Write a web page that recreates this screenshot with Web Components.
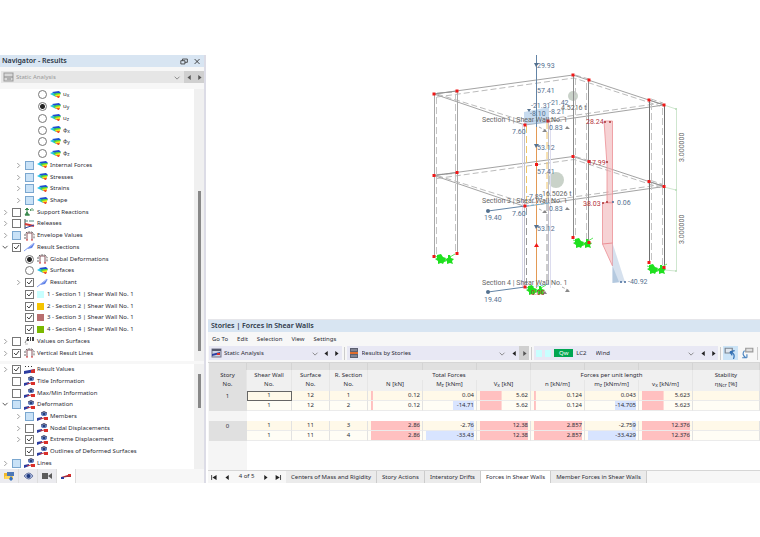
<!DOCTYPE html>
<html lang="en">
<head>
<meta charset="utf-8">
<title>Stories | Forces in Shear Walls</title>
<style>
  body {
    margin: 0;
    background: #fff;
    color: #2c2d36;
    font: 6px/9px "Noto Sans", "Open Sans", sans-serif;
  }
</style>
</head>
<body>
<results-app></results-app>

<script>
const ICONS = {
  surface: `<path d="M0 4 4 2 7 4 6 7z" fill="#25c4e8"/><path d="M2 2 9 1 11 3 5 4z" fill="#1d4fd0"/><path d="M3 4 7 3 11 3 10 5 5 6z" fill="#45d34a"/><path d="M5 5 10 4 10 6 6 7z" fill="#f5e11c"/><path d="M6 6 10 6 9 8 8 8z" fill="#f0522a"/>`,
  support: `<path d="M3 1v6M1 3l2-2 2 2M1 8h5M3 5 1 8h4z" stroke="#3c8a50" fill="#3c8a50"/><path d="M6 3h4M7 2 6 3l1 1M8 1v1" stroke="#5a9a6a" fill="none"/>`,
  release: `<path d="M1 0v10" stroke="#444" fill="none"/><path d="M1 2h3M5 2h5" stroke="#4f8b84" fill="none"/><path d="M1 5 10 7" stroke="#d33a35" stroke-width="2"/><path d="M1 9 10 6" stroke="#3347a5"/>`,
  frame: `<path d="M3 9V2h5v7" stroke="#8c5960" fill="none"/><path d="M1 8V3l2-2h5l2 2v5" stroke="#666" fill="none" stroke-dasharray="2 1"/><path d="M2 9h2M7 9h2" stroke="#d94040"/>`,
  section: `<path d="M0 9 11 1 8 6 3 7z" fill="#5f82e8"/><path d="M0 9 10 1" stroke="#8aa2f2"/>`,
  values: `<path d="M1 7 3 3" stroke="#888"/><path d="M3 1h2v1H4v1h1v2H3zM6 1h1v4H6zM8 1h2v4H8z" fill="#444"/><path d="M1 8h3" stroke="#bbb"/>`,
  result: `<path d="M0 9V6l11-2v3z" fill="#2c3da0"/><path d="M7 5l4-1v4H7z" fill="#d9302a"/><path d="M1 1l1 1M2 1 1 2M4 1l1 1M5 1 4 2M7 1l1 1M8 1 7 2" stroke="#333"/>`,
  display: `<path d="M0 10V7l5-1v2z" fill="#2c3da0"/><path d="M7 6h4v3H7z" fill="#d9302a"/><path d="M3 8 7 7" stroke="#b34"/><ellipse cx="7" cy="3" rx="3" ry="2" fill="#5b78ba"/><path d="M4 2q3-3 6 0" stroke="#446" fill="none"/><circle cx="7" cy="3" r="1" fill="#122a60"/>`,
  analysis: `<rect x="1" y="1" width="9" height="8" fill="#ccd3e4" stroke="#73758a"/><path d="M1 2h9" stroke="#55586e" stroke-width="2"/><path d="M1 8V6l8-2v2z" fill="#2c3da0"/><path d="M6 5h3v2H6z" fill="#d9302a"/>`,
  analysisGray: `<rect x="1" y="1" width="9" height="8" fill="#d8d8d8" stroke="#999"/><path d="M1 5h9M4 7h4" stroke="#888"/>`,
  stories: `<rect x="1" y="0" width="8" height="10" fill="#5c5f70"/><path d="M2 2h6M2 8h6" stroke="#a6a8b4"/><path d="M1 5h8" stroke="#e06c2c" stroke-width="2"/>`,
  folder: `<path d="M0 2h4l1 1h4v5H0z" fill="#f0b92c"/><path d="M3 1h7v4H3z" fill="#4c78b8"/><path d="M1 5h8L8 8H0z" fill="#ffd75a"/><path d="M5 8l2-3 2 3-2 2z" fill="#3470c0"/>`,
  eye: `<path d="M1 5q5-6 9 0-4 6-9 0z" fill="#a9b8dc" stroke="#6a78a4"/><circle cx="5.500" cy="5" r="2" fill="#1f397e"/>`,
  camera: `<rect x="0" y="2" width="6" height="6" fill="#5c5c5c"/><path d="M6 5 10 2v6z" fill="#5c5c5c"/>`,
  line: `<path d="M0 7V6l10-3v3H6z" fill="#a52c3c"/><path d="M0 6h3v2H0z" fill="#2c3da0"/><path d="M7 3h3v2H7z" fill="#d9302a"/>`,
  pickOn: `<path d="M1 1h6v4H1z" fill="#dfe6ee" stroke="#7a8591"/><path d="M5 4q5 1 3 6M5 4l4-1M5 4l2 3" stroke="#2f6fb5" fill="none"/>`,
  pickOff: `<path d="M4 1h6v3H4z" fill="#dfdfdf" stroke="#9a9a9a"/><path d="M3 3q-3 3 1 6M5 9H1M5 9V6" stroke="#4a84c0" fill="none"/>`,
  chevron: `<path d="M2 4l3 3 3-3" stroke="#777" fill="none"/>`,
  right: `<path d="M4 2l3 3-3 3" stroke="#888" fill="none"/>`,
  down: `<path d="M2 3l3 3 3-3" stroke="#333" fill="none"/>`,
  prev: `<path d="M7 2v6L3 5z" fill="currentColor"/>`,
  next: `<path d="M4 2v6l4-3z" fill="currentColor"/>`,
  first: `<path d="M2 2v6" stroke="currentColor"/><path d="M8 2v6L3 5z" fill="currentColor"/>`,
  last: `<path d="M8 2v6" stroke="currentColor"/><path d="M2 2v6l5-3z" fill="currentColor"/>`,
  restore: `<path d="M1 4h5v4H1zM3 4V2h6v4H6" stroke="#333" fill="none"/>`,
  close: `<path d="M2 2l6 6M8 2 2 8" stroke="#222"/>`
};

function icon(name) {
  return `<svg viewBox="0 0 11 10" aria-hidden="true">${ICONS[name] || ''}</svg>`;
}

class TreeItem extends HTMLElement {
  connectedCallback() {
    const level = Number(this.getAttribute('level') || 0);
    const open = this.getAttribute('open');
    const type = this.hasAttribute('radio') ? 'radio' : 'checkbox';
    const state = this.getAttribute('state') || '';
    const color = this.getAttribute('color');
    this.attachShadow({ mode: 'open' }).innerHTML = `
      <style>
        :host {
          display: flex;
          align-items: center;
          min-height: 0;
          padding-left: ${level * 13}px;
        }
        button, .blank {
          box-sizing: border-box;
          flex: none;
          width: 12px;
          height: 10px;
          padding: 0 0 0 1px;
          border: 0;
          background: none;
        }
        svg { display: block; width: 10px; height: 10px; }
        label svg { width: 11px; height: 10px; margin-right: -1px; }
        button svg { width: 9px; height: 9px; }
        input {
          appearance: none;
          flex: none;
          box-sizing: border-box;
          width: 9px;
          height: 9px;
          margin: 0;
          border: 1px solid #777;
          background: #fff;
        }
        input[type=radio] { border-radius: 50%; }
        input[type=radio]:checked {
          background: radial-gradient(circle, #222 0 2px, #fff 3px);
        }
        .check { display: grid; flex: none; margin-right: 3px; }
        .check > * { grid-area: 1 / 1; }
        .check svg { width: 9px; height: 9px; pointer-events: none; }
        .mixed { background: #c9e2f7; border-color: #7ba7cf; }
        label { display: flex; align-items: center; gap: 3px; white-space: nowrap; }
        i { width: 7px; height: 7px; background: ${color || 'none'}; }
      </style>
      ${open === null ? '<span class="blank"></span>'
        : `<button aria-label="Toggle branch">${icon(open === 'yes' ? 'down' : 'right')}</button>`}
      <span class="check">
        <input id="box" type="${type}" class="${state}" ${state === 'on' ? 'checked' : ''}>
        ${type === 'checkbox' && state === 'on'
          ? '<svg viewBox="0 0 9 9"><path d="M2 4l2 2 3-4" stroke="#444" fill="none"/></svg>' : ''}
      </span>
      <label for="box">${color ? '<i></i>' : icon(this.getAttribute('icon'))}<span><slot></slot></span></label>
    `;
  }
}

class StepButton extends HTMLElement {
  connectedCallback() {
    this.attachShadow({ mode: 'open' }).innerHTML = `
      <style>
        :host { display: flex; flex: none; width: 10px; color: #222; }
        :host([muted]) { background: #d0d0d0; color: #555; }
        button {
          display: flex;
          flex: 1;
          align-items: center;
          justify-content: center;
          padding: 0;
          border: 0;
          background: none;
          color: inherit;
        }
        svg { flex: none; width: 9px; height: 9px; }
      </style>
      <button aria-label="${this.getAttribute('label')}">${icon(this.getAttribute('icon'))}</button>
    `;
  }
}

// Drop-down with an optional icon or tags in front and two step buttons behind
class PickList extends HTMLElement {
  connectedCallback() {
    const name = this.getAttribute('icon');
    this.attachShadow({ mode: 'open' }).innerHTML = `
      <style>
        :host { display: flex; align-items: stretch; height: 14px; background: #e8e8f4; }
        :host([disabled]) { background: #e6e6e6; }
        .lead { display: flex; align-items: center; gap: 3px; padding-left: 2px; }
        .lead svg { width: 11px; height: 10px; }
        .pick { display: grid; flex: 1; align-items: center; min-width: 0; }
        .pick > * { grid-area: 1 / 1; }
        .pick svg { width: 9px; height: 9px; justify-self: end; pointer-events: none; margin-right: 2px; }
        select {
          appearance: none;
          width: 100%;
          margin: 0;
          padding: 0 12px 0 2px;
          border: 0;
          background: none;
          color: #2c2d36;
          font: inherit;
        }
        :host([disabled]) select { color: #999; opacity: 1; }
      </style>
      <span class="lead">${name ? icon(name) : ''}<slot></slot></span>
      <span class="pick">
        <select aria-label="${this.getAttribute('label')}" ${this.hasAttribute('disabled') ? 'disabled' : ''}>
          <option>${this.getAttribute('value')}</option>
        </select>
        ${icon('chevron')}
      </span>
      <step-button icon="prev" label="Previous" ${this.hasAttribute('disabled') ? 'muted' : ''}></step-button>
      <step-button icon="next" label="Next" ${this.hasAttribute('end') ? 'muted' : ''}></step-button>
    `;
  }
}

class ResultsNavigator extends HTMLElement {
  connectedCallback() {
    this.attachShadow({ mode: 'open' }).innerHTML = `
      <style>
        :host {
          display: flex;
          flex-direction: column;
          background: #f7f7f7;
          border-right: 2px solid #dcdce6;
        }
        header {
          display: flex;
          align-items: center;
          height: 12px;
          padding-left: 2px;
          background: #d8e5f2;
        }
        h1 { flex: 1; margin: 0; font: 600 7px/12px "Noto Sans", sans-serif; color: #2a3444; }
        header button { width: 13px; height: 12px; padding: 0 2px; border: 0; background: none; }
        header svg { display: block; width: 9px; height: 9px; }
        pick-list { height: 12px; margin: 4px 0 6px 1px; }
        .pane { display: grid; grid-template-columns: 1fr 10px; background: #fff; min-height: 0; }
        .upper { flex: 272; margin-bottom: 3px; }
        .lower { flex: 105; }
        .tree { display: grid; grid-auto-rows: 1fr; min-width: 0; overflow: hidden; }
        .upper .tree { padding-bottom: 2px; }
        .scroll { background: #f0f0f0; display: flex; flex-direction: column; align-items: center; }
        .scroll::before { content: ""; flex: var(--before); }
        .scroll b { width: 3px; flex: var(--thumb); background: #888; }
        .scroll::after { content: ""; flex: var(--after); }
        .upper .scroll { --before: 102; --thumb: 160; --after: 10; }
        .lower .scroll { --before: 10; --thumb: 34; --after: 61; }
        sub { font-size: 5px; line-height: 0; vertical-align: -1px; }
        footer { display: flex; height: 14px; }
        footer button {
          width: 19px;
          padding: 0;
          border: 0;
          border-right: 1px solid #ddd;
          background: #ebebef;
        }
        footer button.on { background: #fff; }
        footer svg { width: 11px; height: 10px; display: block; margin: auto; }
      </style>
      <header>
        <h1>Navigator - Results</h1>
        <button aria-label="Restore">${icon('restore')}</button>
        <button aria-label="Close">${icon('close')}</button>
      </header>
      <pick-list icon="analysisGray" value="Static Analysis" label="Analysis type" disabled end></pick-list>
      <div class="pane upper">
        <div class="tree">
          <tree-item level="2" radio icon="surface">u<sub>x</sub></tree-item>
          <tree-item level="2" radio state="on" icon="surface">u<sub>y</sub></tree-item>
          <tree-item level="2" radio icon="surface">u<sub>z</sub></tree-item>
          <tree-item level="2" radio icon="surface">φ<sub>x</sub></tree-item>
          <tree-item level="2" radio icon="surface">φ<sub>y</sub></tree-item>
          <tree-item level="2" radio icon="surface">φ<sub>z</sub></tree-item>
          <tree-item level="1" open="no" state="mixed" icon="surface">Internal Forces</tree-item>
          <tree-item level="1" open="no" state="mixed" icon="surface">Stresses</tree-item>
          <tree-item level="1" open="no" state="mixed" icon="surface">Strains</tree-item>
          <tree-item level="1" open="no" state="mixed" icon="surface">Shape</tree-item>
          <tree-item open="no" icon="support">Support Reactions</tree-item>
          <tree-item open="no" icon="release">Releases</tree-item>
          <tree-item open="no" state="mixed" icon="frame">Envelope Values</tree-item>
          <tree-item open="yes" state="on" icon="section">Result Sections</tree-item>
          <tree-item level="1" radio state="on" icon="frame">Global Deformations</tree-item>
          <tree-item level="1" radio icon="surface">Surfaces</tree-item>
          <tree-item level="1" open="no" state="on" icon="section">Resultant</tree-item>
          <tree-item level="1" state="on" color="#c8ffff">1 - Section 1 | Shear Wall No. 1</tree-item>
          <tree-item level="1" state="on" color="#f5c400">2 - Section 2 | Shear Wall No. 1</tree-item>
          <tree-item level="1" state="on" color="#b96e6e">3 - Section 3 | Shear Wall No. 1</tree-item>
          <tree-item level="1" state="on" color="#7ab800">4 - Section 4 | Shear Wall No. 1</tree-item>
          <tree-item open="no" icon="values">Values on Surfaces</tree-item>
          <tree-item open="no" state="on" icon="frame">Vertical Result Lines</tree-item>
        </div>
        <div class="scroll"><b></b></div>
      </div>
      <div class="pane lower">
        <div class="tree">
          <tree-item open="no" state="on" icon="result">Result Values</tree-item>
          <tree-item icon="display">Title Information</tree-item>
          <tree-item icon="display">Max/Min Information</tree-item>
          <tree-item open="yes" state="mixed" icon="display">Deformation</tree-item>
          <tree-item level="1" open="no" state="mixed" icon="display">Members</tree-item>
          <tree-item level="1" open="no" icon="display">Nodal Displacements</tree-item>
          <tree-item level="1" open="no" state="on" icon="display">Extreme Displacement</tree-item>
          <tree-item level="1" state="on" icon="display">Outlines of Deformed Surfaces</tree-item>
          <tree-item open="no" state="mixed" icon="display">Lines</tree-item>
        </div>
        <div class="scroll"><b></b></div>
      </div>
      <footer>
        <button aria-label="Data">${icon('folder')}</button>
        <button aria-label="Display">${icon('eye')}</button>
        <button aria-label="Views">${icon('camera')}</button>
        <button class="on" aria-label="Results">${icon('line')}</button>
      </footer>
    `;
  }
}

class ModelView extends HTMLElement {
  connectedCallback() {
    // one storey slab: solid outline plus the dashed deformed outline
    const slab = (y) => `
      <g transform="translate(0 ${y})">
        <path class="edge" d="M434 94 573 75 664 105 525 125z"/>
        <path class="dash" d="M437 97 574 78 660 106M437 94 527 122 662 103M437 93l20-1M575 75l14 4M651 99l12 4"/>
        <path class="edge" d="M434 94l23-3M649 100l15 5"/>
      </g>`;
    const column = (a, ya, b, yb, tone) => `
      <path stroke="${tone}" fill="none" d="M${a} ${ya}V${ya + 163}M${b} ${yb}V${yb + 163}"/>
      <path class="coldash" d="M${a + 2} ${ya + 3}V${ya + 163}M${b - 2} ${yb + 3}V${yb + 163}"/>`;
    const nodes = [[434, 94], [457, 91], [573, 75], [589, 80], [649, 100], [664, 105]];
    const node = (x, y) => `<rect x="${x - 1.5}" y="${y - 1.5}" width="3" height="3"/>`;
    const support = (x, y) => `
      <g transform="translate(${x} ${y})" fill="#1fe01f">
        <path d="M-10-3 0 1 10-5" fill="none" stroke="#5fe85f"/>
        <path d="M-8-4l4-1 2 3 3 1-1 2 2 1-3 1-1 2-2-1-3 1 0-3-3-2 2-1z"/>
        <path d="M3-4l2 0 1 3 3 1-2 2 1 3-3-1-3 1 0-3-2-1 3-2z"/>
      </g>`;
    this.attachShadow({ mode: 'open' }).innerHTML = `
      <style>
        :host { display: block; }
        svg { display: block; width: 100%; font-family: Roboto, sans-serif; font-size: 7px; }
        .edge { fill: none; stroke: #8c8c8c; stroke-width: .8; }
        .dash { fill: none; stroke: #aaa; stroke-width: .8; stroke-dasharray: 6 3; }
        .coldash { fill: none; stroke: #c4c4c4; stroke-dasharray: 7 3; }
        .blue { fill: #56718f; }
        .gray { fill: #666; }
        .red { fill: #b5323c; }
      </style>
      <svg viewBox="206 55 554 264" role="img" aria-label="Model with shear wall results">
        <circle cx="573" cy="96" r="5" fill="#c9d2c9"/>
        <circle cx="556" cy="180" r="8" fill="#c9d2c9"/>
        <path d="M676.5 108V271M664 105l12 4M664 187l12 3M664 270l12 1" stroke="#cfe6cf" fill="none"/>
        <g fill="#b9dcb9"><circle cx="676" cy="109" r="1"/><circle cx="676" cy="190" r="1"/><circle cx="676" cy="271" r="1"/></g>
        ${slab(0)}${slab(81.5)}
        ${column(434.5, 94, 457.5, 91, '#a8a8a8')}
        ${column(573.5, 75, 588.5, 80, '#8c8c8c')}
        ${column(649.5, 100, 664.5, 105, '#707070')}
        <path d="M522.5 124V288M550.5 122V288" stroke="#dcdcee" fill="none"/>
        <path d="M524.5 125V287M548.5 121V284" stroke="#c0c0cc" fill="none"/>
        <path d="M526.5 126V206M547 122V202" stroke="#f0c566" stroke-dasharray="7 3" fill="none"/>
        <path d="M526.5 208V287M547 204V284" stroke="#999" stroke-dasharray="7 3" fill="none"/>
        <path d="M524 112 549 107V123L524 125z" fill="#a9c8e6" fill-opacity=".65"/>
        <path d="M536.5 55V127" stroke="#6384a6" fill="none"/>
        <path d="M536.5 127V288" stroke="#e39a55" fill="none"/>
        <path d="M525 206 488 211M525 287 488 292" stroke="#6384a6" fill="none"/>
        <path d="M526 206 549 203M526 288 549 284" stroke="#6ab4e0" stroke-dasharray="3 2" fill="none"/>
        <g fill="#54718f">
          <circle cx="488" cy="211" r="2"/><circle cx="488" cy="292" r="2"/>
          <path d="M534 63h5l-3 4zM534 144h5l-3 4zM534 225h5l-3 4zM527 109h4l-2 3z"/>
        </g>
        <path d="M539 127 547 131M539 209 547 213M539 290 547 294M562 287 570 291" stroke="#aaa" stroke-dasharray="3 2"/>
        <path d="M542 132h5l-2-3zM542 213h5l-2-3zM542 294h5l-2-3zM565 129h5l-3-3zM565 210h5l-3-3zM565 292h5l-3-3z" fill="#888"/>
        <path d="M604 121H612.5V203H607V165z" fill="#f0b4b8" fill-opacity=".6" stroke="#ec8f95" stroke-width=".8"/>
        <path d="M602.5 203 612.5 202V266L602.5 244z" fill="#f0b4b8" fill-opacity=".6" stroke="#ec8f95" stroke-width=".8"/>
        <path d="M602.5 244 612.5 243" stroke="#ec8f95"/>
        <path d="M612.5 243 625 282 612.5 283z" fill="#b4c8e0" fill-opacity=".55"/>
        <path d="M612.5 266 619 282 612.5 283z" fill="#9db9d6" fill-opacity=".6"/>
        <g fill="#a33"><circle cx="605" cy="122" r="1"/><circle cx="610" cy="122" r="1"/><circle cx="607" cy="162" r="1"/><circle cx="603" cy="203" r="1"/><circle cx="607" cy="202" r="1"/></g>
        <g fill="#446a9a"><circle cx="613" cy="202" r="1"/><circle cx="621" cy="282" r="1"/><circle cx="625" cy="282" r="1"/></g>
        ${support(445, 259)}${support(583, 243)}${support(657, 269)}${support(536, 290)}
        <g fill="#f01818">
          ${nodes.map(([x, y]) => node(x, y) + node(x, y + 81.5) + node(x, y + 162.5)).join('')}
          ${node(525, 125)}${node(548, 121)}${node(525, 206)}${node(525, 287)}${node(536.5, 164.5)}
          <path d="M534 247h5l-2.500-4z"/>
        </g>
        <g class="blue">
          <text x="537" y="68">29.93</text>
          <text x="537" y="93">57.41</text>
          <text x="531" y="108">-21.31</text>
          <text x="549" y="105">-21.42</text>
          <text x="549" y="114">-8.21</text>
          <text x="530" y="116">-8.10</text>
          <text x="512" y="134">7.60</text>
          <text x="549" y="130">0.83</text>
          <text x="537" y="150">53.12</text>
          <text x="537" y="174">57.41</text>
          <text x="527" y="199">-7.89</text>
          <text x="512" y="216">7.60</text>
          <text x="549" y="211">0.83</text>
          <text x="537" y="231">53.12</text>
          <text x="484" y="220">19.40</text>
          <text x="484" y="302">19.40</text>
          <text x="617" y="205">0.06</text>
          <text x="628" y="284">-40.92</text>
        </g>
        <g class="gray">
          <text x="482" y="122">Section 1 | Shear Wall No. 1</text>
          <text x="482" y="203">Section 3 | Shear Wall No. 1</text>
          <text x="482" y="285">Section 4 | Shear Wall No. 1</text>
          <text x="561" y="110">4.5216 t</text>
          <text x="542" y="196">16.5026 t</text>
          <text transform="translate(684 162) rotate(-90)">3.000000</text>
          <text transform="translate(684 244) rotate(-90)">3.000000</text>
        </g>
        <g class="red">
          <text x="586" y="124">28.24</text>
          <text x="588" y="165">17.99</text>
          <text x="583" y="206">38.03</text>
          <text x="531" y="295">0.00</text>
        </g>
      </svg>
    `;
  }
}

class ForcesTable extends HTMLElement {
  connectedCallback() {
    // each result is [value, bar share in percent]
    const rows = [
      ['1', 1, 12, 1, ['0.12', 4], ['0.04', 0], ['5.62', 45], ['0.124', 4], ['0.043', 0], ['5.623', 45]],
      ['', 1, 12, 2, ['0.12', 4], ['-14.71', 44], ['5.62', 45], ['0.124', 4], ['-14.705', 44], ['5.623', 45]],
      null,
      ['0', 1, 11, 3, ['2.86', 100], ['-2.76', 8], ['12.38', 100], ['2.857', 100], ['-2.759', 8], ['12.376', 100]],
      ['', 1, 11, 4, ['2.86', 100], ['-33.43', 100], ['12.38', 100], ['2.857', 100], ['-33.429', 100], ['12.376', 100]]
    ];
    const cell = ([value, share]) =>
      `<td class="num"><div class="${value.startsWith('-') ? 'neg' : 'pos'}" style="--share: ${share}%">${value}</div></td>`;
    const body = rows.map((row) => {
      if (!row) return '<tr class="gap"><th></th><td colspan="10"></td></tr>';
      const [story, wall, surface, section, ...values] = row;
      return `<tr class="${story ? 'a' : 'b'}"><th scope="row">${story}</th><td>${wall}</td><td>${surface}</td><td>${section}</td>${values.map(cell).join('')}<td></td></tr>`;
    }).join('');
    this.attachShadow({ mode: 'open' }).innerHTML = `
      <style>
        :host { display: block; background: linear-gradient(90deg, #f5f5f5 38px, #fff 38px); }
        table { width: 100%; table-layout: fixed; border-collapse: separate; border-spacing: 0; text-align: center; }
        .s38 { width: 38px; }
        .s45 { width: 45px; }
        .s54 { width: 54px; }
        .s55 { width: 55px; }
        th, td {
          box-sizing: border-box;
          padding: 0;
          border-right: 1px solid #e2e2e2;
          font-weight: 400;
          white-space: nowrap;
        }
        thead th { background: #f0f0f0; border-color: #e6e6e6; }
        thead .cap th { height: 7px; background: #e0e0e0; border-color: #d4d4d4; }
        thead .names th { height: 10px; }
        thead .units th { height: 11px; vertical-align: top; }
        thead .first { background: #e0e0e0; }
        sub { font-size: 5px; line-height: 0; vertical-align: -1px; }
        tbody th, tbody td { height: 10px; }
        tbody th { background: #e0e0e0; border-color: #e0e0e0; }
        tbody td { border-bottom: 1px solid #ebebeb; }
        .a td { background: #fff9e9; }
        .b td { background: #fffdf5; }
        .gap th { background: #f5f5f5; border-color: #f5f5f5; }
        .gap td { border: 0; background: #fff; }
        .num { padding: 0 2px 0 3px; }
        .num div {
          text-align: right;
          background: linear-gradient(var(--bar), var(--bar)) var(--side) / var(--share) 100% no-repeat;
        }
        .pos { --bar: #ffc0c0; --side: left; }
        .neg { --bar: #d8e4ff; --side: right; }
        tr.a:first-child td:nth-child(2) { outline: 1px solid #666; outline-offset: -1px; }
      </style>
      <table>
        <colgroup>
          <col class="s38"><col class="s45"><col class="s38"><col class="s38">
          <col class="s55"><col class="s54"><col class="s54"><col class="s54"><col class="s54"><col class="s54"><col>
        </colgroup>
        <thead>
          <tr class="cap"><th class="first"></th>${'<th></th>'.repeat(10)}</tr>
          <tr class="names">
            <th class="first">Story</th><th>Shear Wall</th><th>Surface</th><th>R. Section</th>
            <th colspan="3">Total Forces</th><th colspan="3">Forces per unit length</th><th>Stability</th>
          </tr>
          <tr class="units">
            <th class="first">No.</th><th>No.</th><th>No.</th><th>No.</th>
            <th>N [kN]</th><th>M<sub>z</sub> [kNm]</th><th>V<sub>x</sub> [kN]</th>
            <th>n [kN/m]</th><th>m<sub>z</sub> [kNm/m]</th><th>v<sub>x</sub> [kN/m]</th><th>η<sub>Ncr</sub> [%]</th>
          </tr>
        </thead>
        <tbody>${body}</tbody>
      </table>
    `;
  }
}

class StoriesPanel extends HTMLElement {
  connectedCallback() {
    this.attachShadow({ mode: 'open' }).innerHTML = `
      <style>
        :host { display: flex; flex-direction: column; background: #f7f7f7; margin-left: 2px; border-top: 1px solid #e6e6ea; }
        h2 { margin: 0; padding-left: 3px; background: #d8e5f2; color: #2a3444; font: 600 7px/12px "Noto Sans", sans-serif; }
        .menu { display: flex; gap: 9px; height: 14px; padding-left: 4px; align-items: center; }
        .menu button { padding: 0; border: 0; background: none; color: inherit; font: inherit; }
        .bar { display: flex; align-items: center; height: 14px; padding: 0 2px 2px 1px; gap: 2px; border-bottom: 1px solid #d6d6d6; }
        .bar hr { width: 1px; height: 13px; margin: 0; border: 0; background: #ccc; }
        .tag { width: 6px; height: 7px; background: #c8ffff; }
        .qw { width: 19px; background: #00a651; color: #fff; text-align: center; line-height: 8px; }
        .case { margin-right: 7px; }
        .tool { width: 15px; height: 14px; padding: 0; border: 0; background: none; }
        .tool.on { background: #cce4f7; }
        .tool svg { display: block; width: 13px; height: 12px; margin: auto; }
        forces-table { flex: 1; margin-left: 1px; }
        footer { display: flex; height: 12px; border-top: 1px solid #d6d6d6; }
        .pages { display: flex; align-items: stretch; width: 78px; justify-content: space-between; box-sizing: border-box; padding: 0 2px 0 1px; line-height: 11px; }
        .tabs { display: flex; }
        .tabs button {
          padding: 0 5px;
          border: 0;
          border-right: 1px solid #ccc;
          background: #ebebeb;
          color: inherit;
          font: inherit;
        }
        .tabs .on { background: #fff; }
      </style>
      <h2>Stories | Forces in Shear Walls</h2>
      <div class="menu">
        <button>Go To</button><button>Edit</button><button>Selection</button><button>View</button><button>Settings</button>
      </div>
      <div class="bar">
        <pick-list style="flex: 132 1 0" icon="analysis" value="Static Analysis" label="Analysis type"></pick-list>
        <hr>
        <pick-list style="flex: 182 1 0" icon="stories" value="Results by Stories" label="Result grouping" end></pick-list>
        <hr>
        <pick-list style="flex: 183 1 0" value="Wind" label="Load case">
          <span class="tag"></span><span class="tag"></span><span class="qw">Qw</span><span class="case">LC2</span>
        </pick-list>
        <hr>
        <button class="tool on" aria-label="Synchronize selection">${icon('pickOn')}</button>
        <button class="tool" aria-label="Show selection">${icon('pickOff')}</button>
        <hr>
      </div>
      <forces-table></forces-table>
      <footer>
        <span class="pages">
          <step-button icon="first" label="First"></step-button>
          <step-button icon="prev" label="Previous"></step-button>
          <span>&nbsp; 4 of 5 &nbsp;</span>
          <step-button icon="next" label="Next"></step-button>
          <step-button icon="last" label="Last"></step-button>
        </span>
        <span class="tabs">
          <button>Centers of Mass and Rigidity</button>
          <button>Story Actions</button>
          <button>Interstory Drifts</button>
          <button class="on">Forces in Shear Walls</button>
          <button>Member Forces in Shear Walls</button>
        </span>
      </footer>
    `;
  }
}

class ResultsApp extends HTMLElement {
  connectedCallback() {
    this.attachShadow({ mode: 'open' }).innerHTML = `
      <style>
        :host {
          display: grid;
          grid-template-columns: 206px minmax(0, 1fr);
          grid-template-rows: auto 164px;
          padding-top: 55px;
        }
        results-navigator { grid-row: 1 / 3; }
      </style>
      <results-navigator></results-navigator>
      <model-view></model-view>
      <stories-panel></stories-panel>
    `;
  }
}

customElements.define('tree-item', TreeItem);
customElements.define('step-button', StepButton);
customElements.define('pick-list', PickList);
customElements.define('results-navigator', ResultsNavigator);
customElements.define('model-view', ModelView);
customElements.define('forces-table', ForcesTable);
customElements.define('stories-panel', StoriesPanel);
customElements.define('results-app', ResultsApp);
</script>
</body>
</html>
